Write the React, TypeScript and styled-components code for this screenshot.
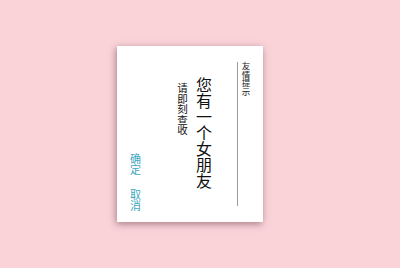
import React from 'react';
import styled, { createGlobalStyle } from 'styled-components';

const GlobalStyle = createGlobalStyle`
  html, body {
    margin: 0;
    padding: 0;
    background-color: #fad3d9;
    font-family: "Noto Sans CJK SC", "Noto Sans", sans-serif;
  }
`;

const Stage = styled.div`
  height: 268px;
  display: flex;
  justify-content: center;
  align-items: center;
`;

const Card = styled.div`
  writing-mode: vertical-rl;
  width: 146px;
  height: 176px;
  box-sizing: border-box;
  margin-right: 20px;
  padding-right: 12px;
  background-color: #ffffff;
  box-shadow: -1px 2px 7px rgba(90, 40, 50, 0.5);
`;

const Header = styled.div`
  margin: 16px 0;
  padding-left: 3px;
  border-left: 1.5px solid #9c9c9c;
  font-size: 8.5px;
  line-height: 10px;
  color: #222;
`;

const Message = styled.div<{ $size: number; $top: number; $gap: number }>`
  margin-top: ${p => p.$top}px;
  margin-right: ${p => p.$gap}px;
  font-size: ${p => p.$size}px;
  line-height: ${p => p.$size + 3}px;
  color: #111;
`;

const Actions = styled.div`
  display: flex;
  gap: 14px;
  margin-top: 107px;
  margin-right: 33px;
`;

const ActionButton = styled.button`
  writing-mode: vertical-rl;
  border: none;
  background: none;
  padding: 0;
  font-family: inherit;
  font-size: 11px;
  line-height: 14px;
  color: #3fa7be;
  cursor: pointer;
`;

export default function App() {
  return (
    <>
      <GlobalStyle />
      <Stage>
        <Card>
          <Header>友情提示</Header>
          <Message $size={16} $top={31} $gap={24}>您有一个女朋友</Message>
          <Message $size={10.5} $top={37} $gap={5}>请即刻查收</Message>
          <Actions>
            <ActionButton>确定</ActionButton>
            <ActionButton>取消</ActionButton>
          </Actions>
        </Card>
      </Stage>
    </>
  );
}
